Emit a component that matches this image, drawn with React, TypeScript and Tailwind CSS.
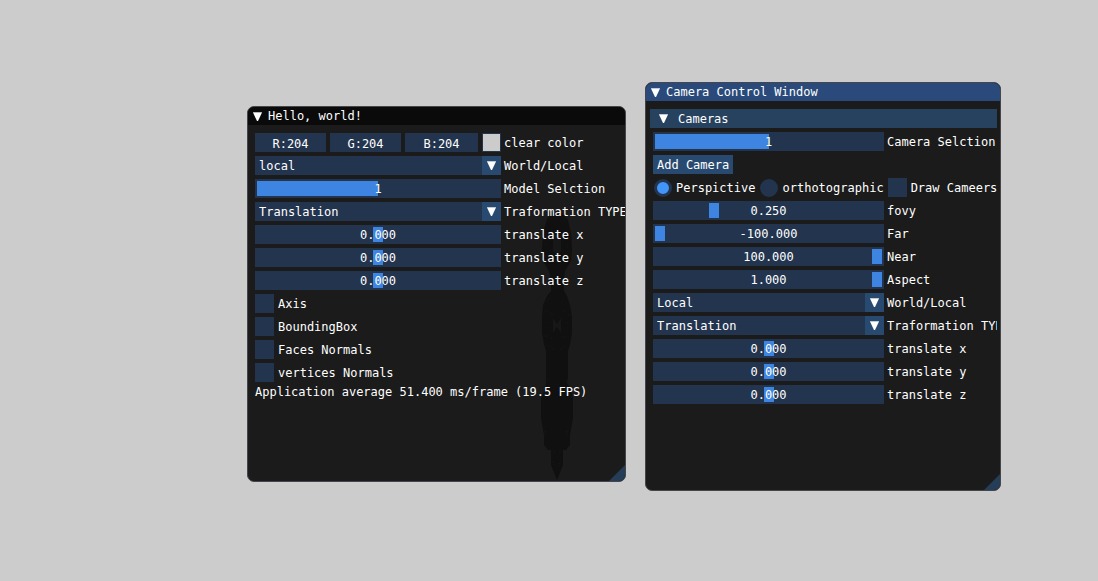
import { useId, useState, type ReactNode } from "react";

function Triangle() {
  return (
    <svg className="size-[9px] shrink-0" viewBox="0 0 9 9" aria-hidden="true">
      <path d="M0 0.5H9L5 9H4Z" fill="#fff" />
      <path d="M0 0H9V1H0Z" fill="#fff" opacity="0.4" />
    </svg>
  );
}

function Row({ id, label, children }: { id: string; label: string; children: ReactNode }) {
  return (
    <div className="flex h-[19px] items-center gap-[3px]">
      <div className="relative h-full w-(--field) shrink-0">{children}</div>
      <label htmlFor={id} className="pt-0.5 whitespace-nowrap">{label}</label>
    </div>
  );
}

type SliderProps = { label: string; min: number; max: number; initial: number; digits?: number; wide?: boolean };

function Slider({ label, min, max, initial, digits = 3, wide = false }: SliderProps) {
  const id = useId();
  const [value, setValue] = useState(initial);
  const thumb = wide ? "[&::-webkit-slider-thumb]:w-1/2" : "[&::-webkit-slider-thumb]:w-2.5";
  return (
    <Row id={id} label={label}>
      <input
        id={id}
        type="range"
        min={min}
        max={max}
        step={digits ? 0.001 : 1}
        value={value}
        onChange={(e) => setValue(Number(e.target.value))}
        className={`block h-full w-full appearance-none bg-[#23344e] px-0.5 [&::-webkit-slider-thumb]:h-[15px] [&::-webkit-slider-thumb]:appearance-none [&::-webkit-slider-thumb]:bg-[#3d85e0] ${thumb}`}
      />
      <output htmlFor={id} className="pointer-events-none absolute inset-0 flex items-center justify-center pt-0.5">
        {value.toFixed(digits)}
      </output>
    </Row>
  );
}

function Combo({ label, options }: { label: string; options: string[] }) {
  const id = useId();
  return (
    <Row id={id} label={label}>
      <select id={id} className="block h-full w-full appearance-none bg-[#23344e] px-1 pt-0.5">
        {options.map((o) => (
          <option key={o}>{o}</option>
        ))}
      </select>
      <span className="pointer-events-none absolute inset-y-0 right-0 flex w-[19px] items-center justify-center bg-[#294a70]">
        <Triangle />
      </span>
    </Row>
  );
}

function Check({ label }: { label: string }) {
  return (
    <label className="flex h-[19px] items-center gap-1">
      <input type="checkbox" className="size-[19px] shrink-0 appearance-none bg-[#23344e] checked:bg-[#4296fa]" />
      <span className="pt-0.5 whitespace-nowrap">{label}</span>
    </label>
  );
}

function Radio({ label, checked }: { label: string; checked?: boolean }) {
  return (
    <label className="flex h-[19px] items-center gap-1">
      <span className="flex size-[19px] shrink-0 items-center justify-center">
        <input
          type="radio"
          name="projection"
          defaultChecked={checked}
          className="size-[18px] appearance-none rounded-full border-3 border-[#23344e] bg-[#23344e] checked:bg-[#4296fa]"
        />
      </span>
      <span className="pt-0.5 whitespace-nowrap">{label}</span>
    </label>
  );
}

function Grip() {
  return (
    <svg className="absolute right-0 bottom-0 size-4" viewBox="0 0 16 16" aria-hidden="true">
      <path d="M16 0V16H0Z" fill="#263d58" />
    </svg>
  );
}

function Silhouette() {
  return (
    <svg className="pointer-events-none absolute top-[92px] left-[293px] h-[282px] w-8" viewBox="0 0 32 282" aria-hidden="true">
      <path
        d="M6 20L10 15L16 13L22 15L27 21L30 34L31 50L30 62L24 72L23 80V92L26 97L29 106L31 118V134L29 145L27 152V178L26 184L30 190L32 199V219L29 236V246L25 251H22V266L16 281L10 266V251H7L3 246V236L0 219V199L4 190L5 184V152L3 145L1 134V118L2 106L6 97L10 92V80L8 72L2 62L1 50L2 34Z"
        fill="#101010"
      />
      <path d="M12 36H20V52L16 58L12 52ZM12 119L16 125L20 119V134L16 128L12 134Z" fill="#171717" />
      <path
        d="M7 22l4-4M21 18l4 5M5 34h2M25 34h2M4 46h2M26 47h2M7 61h3M22 61h3M6 103l4-5M4 112h3M10 115h3M22 112h3M27 116h2M5 124h2M26 124h2M4 137h4M10 139h2M21 138h6M8 146l5 5M19 151l5-5M6 181h1M25 182h1M4 232v4M26 232v4M13 251v3M19 251v3M13 263v3M18 264v3"
        fill="none"
        stroke="#191919"
        strokeDasharray="1 1"
      />
    </svg>
  );
}

function Channel({ name, className }: { name: string; className: string }) {
  return <input aria-label={name} defaultValue={`${name}:204`} className={`h-full min-w-0 bg-[#23344e] pt-0.5 text-center ${className}`} />;
}

export default function App() {
  const colorId = useId();
  return (
    <main className="relative min-h-screen overflow-hidden bg-[#cccccc] font-['DejaVu_Sans_Mono','Liberation_Mono',monospace] text-[12px] leading-[13px] text-white">
      <section className="absolute top-[106px] left-[247px] min-h-[376px] w-[379px] overflow-hidden rounded-[7px] border border-[#45454b] bg-[#1b1b1b] [--field:246px]">
        <Silhouette />
        <h2 className="relative flex h-[18px] items-center gap-1.5 bg-[#0a0a0a] px-[5px]">
          <Triangle />
          Hello, world!
        </h2>
        <Grip />
        <div className="relative flex flex-col gap-1 py-2 pl-[7px]">
          <Row id={colorId} label="clear color">
            <div className="flex h-full gap-1">
              <Channel name="R" className="w-[71px]" />
              <Channel name="G" className="w-[71px]" />
              <Channel name="B" className="w-[73px]" />
              <input
                id={colorId}
                type="color"
                defaultValue="#cccccc"
                className="size-[19px] appearance-none bg-[#23344e] p-px [&::-webkit-color-swatch]:border-0 [&::-webkit-color-swatch-wrapper]:p-0"
              />
            </div>
          </Row>
          <Combo label="World/Local" options={["local", "world"]} />
          <Slider label="Model Selction" min={1} max={2} initial={1} digits={0} wide />
          <Combo label="Traformation TYPE" options={["Translation", "Rotation", "Scale"]} />
          <Slider label="translate x" min={-10} max={10} initial={0} />
          <Slider label="translate y" min={-10} max={10} initial={0} />
          <Slider label="translate z" min={-10} max={10} initial={0} />
          <Check label="Axis" />
          <Check label="BoundingBox" />
          <Check label="Faces Normals" />
          <Check label="vertices Normals" />
          <p className="whitespace-nowrap">Application average 51.400 ms/frame (19.5 FPS)</p>
        </div>
      </section>

      <section className="absolute top-[82px] left-[645px] min-h-[409px] w-[356px] overflow-hidden rounded-[7px] border border-[#45454b] bg-[#1b1b1b] [--field:231px]">
        <h2 className="flex h-[18px] items-center gap-1.5 bg-[#294a7a] px-[5px]">
          <Triangle />
          Camera Control Window
        </h2>
        <Grip />
        <div className="relative mr-[3px] flex flex-col gap-1 overflow-hidden py-2 pl-[7px]">
          <button type="button" className="-ml-[3px] flex h-[19px] items-center gap-2.5 bg-[#26425f] px-[9px]">
            <Triangle />
            <span className="pt-0.5">Cameras</span>
          </button>
          <Slider label="Camera Selction" min={1} max={2} initial={1} digits={0} wide />
          <button type="button" className="h-[19px] self-start bg-[#294a70] px-1 pt-0.5">Add Camera</button>
          <div className="flex gap-1">
            <Radio label="Perspictive" checked />
            <Radio label="orthotographic" />
            <Check label="Draw Cameers" />
          </div>
          <Slider label="fovy" min={0} max={1} initial={0.25} />
          <Slider label="Far" min={-100} max={100} initial={-100} />
          <Slider label="Near" min={-100} max={100} initial={100} />
          <Slider label="Aspect" min={0} max={1} initial={1} />
          <Combo label="World/Local" options={["Local", "World"]} />
          <Combo label="Traformation TYPE" options={["Translation", "Rotation", "Scale"]} />
          <Slider label="translate x" min={-10} max={10} initial={0} />
          <Slider label="translate y" min={-10} max={10} initial={0} />
          <Slider label="translate z" min={-10} max={10} initial={0} />
        </div>
      </section>
    </main>
  );
}
